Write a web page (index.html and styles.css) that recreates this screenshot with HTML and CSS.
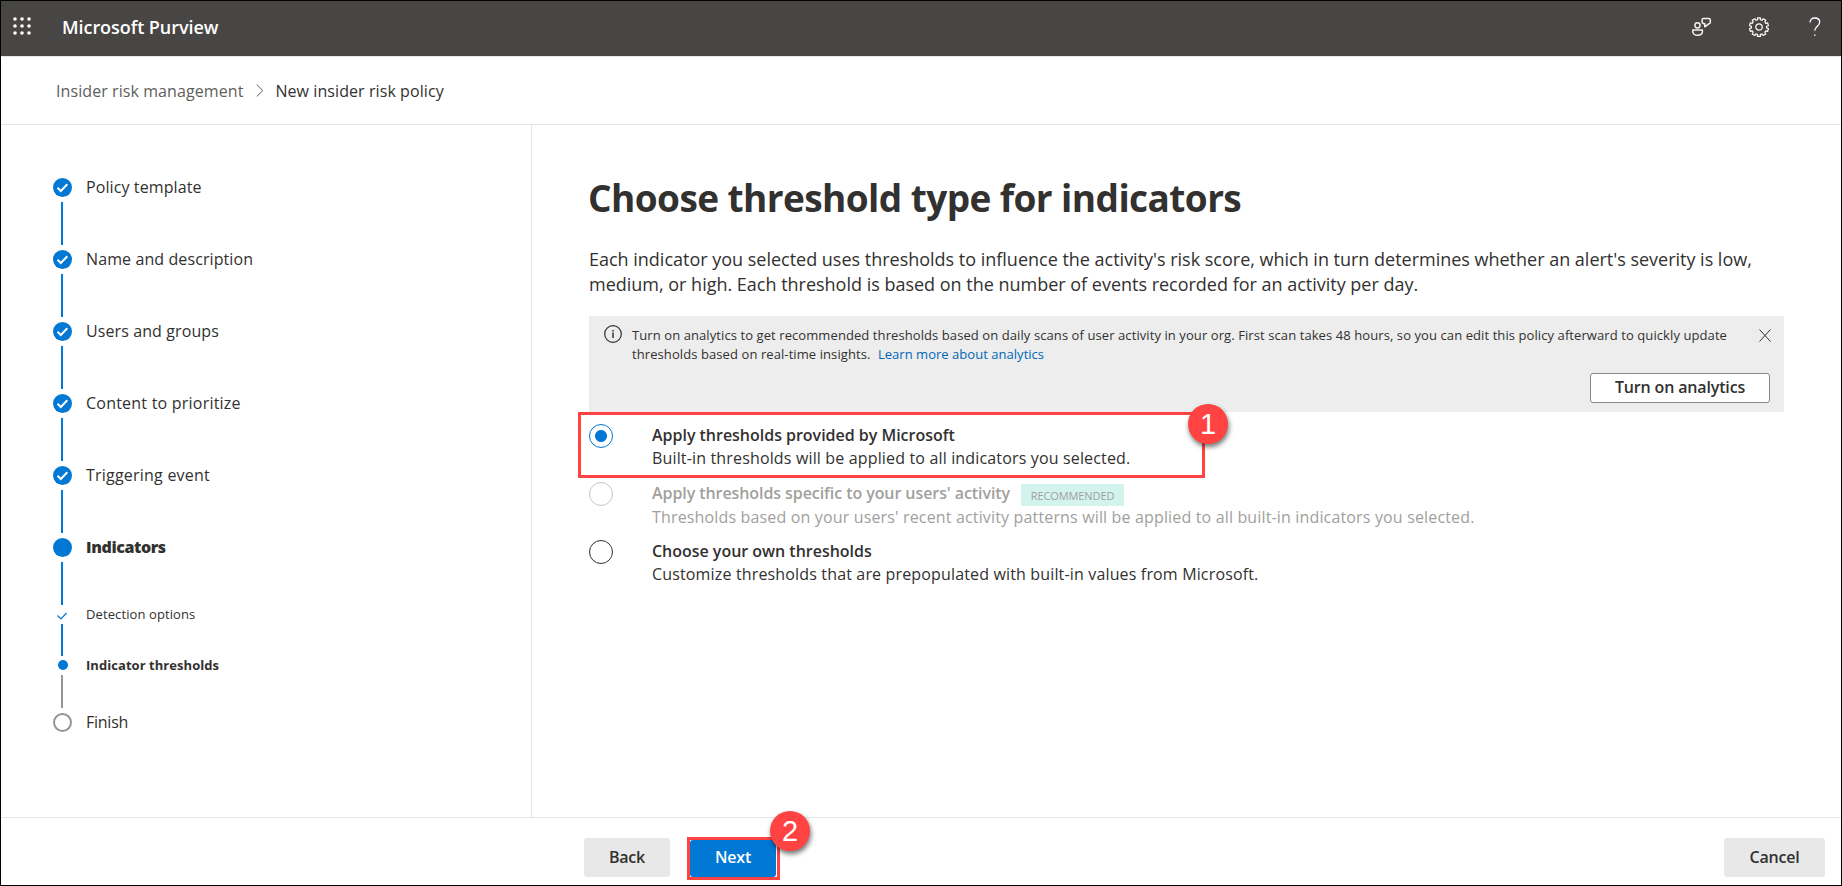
FILE: index.html
```html
<!DOCTYPE html>
<html lang="en">
<head>
<meta charset="utf-8">
<title>Microsoft Purview</title>
<link rel="stylesheet" href="styles.css">
</head>
<body>
<div class="app">
  <header class="topbar">
    <svg class="waffle" width="18" height="18" viewBox="0 0 18 18"><g fill="#fff"><circle cx="2" cy="2" r="1.8"/><circle cx="9" cy="2" r="1.8"/><circle cx="16" cy="2" r="1.8"/><circle cx="2" cy="9" r="1.8"/><circle cx="9" cy="9" r="1.8"/><circle cx="16" cy="9" r="1.8"/><circle cx="2" cy="16" r="1.8"/><circle cx="9" cy="16" r="1.8"/><circle cx="16" cy="16" r="1.8"/></g></svg>
    <span class="brand">Microsoft Purview</span>
    <div class="tools">
      <svg width="20" height="20" viewBox="0 0 20 20" fill="none" stroke="#f3f2f1" stroke-width="1.5" stroke-linejoin="round"><circle cx="5.500" cy="8.300" r="2.600"/><path d="M.8 13h9.600v1.600c0 2.200-1.900 3.700-4.800 3.700S.8 16.800.8 14.600z"/><path d="M11.200 1.500h5.600q1.500 0 1.500 1.500v2.200q0 1.600-1.500 1.600l-4 3V6.800q-2.400 0-2.700-2V3q0-1.500 1.100-1.500z"/></svg>
      <svg class="gear" width="20" height="20" viewBox="0 0 20 20" fill="none" stroke="#fff" stroke-width="1.200" stroke-linejoin="round"><circle cx="10" cy="10" r="3.200"/><path d="M8.700 2.700 8.500.800h3l-.2 1.900 1.700.6 1.300-1.600 2.500 1.500-1 1.800 1 1.300 1.900-.5.700 2.900-1.800.6v1.600l1.800.6-.7 2.900-1.900-.5-1 1.300 1 1.800-2.500 1.500-1.300-1.600-1.700.6.2 1.900h-3l.2-1.900-1.700-.6-1.300 1.600-2.500-1.500 1-1.800-1-1.300-1.900.5-.7-2.900 1.800-.6V9.300L.600 8.700l.7-2.900 1.900.5 1-1.300-1-1.800 2.500-1.500L7 3.300z"/></svg>
      <svg class="help" width="12" height="20" viewBox="0 0 12 20" fill="none" stroke="#fff" stroke-width="1.300"><path d="M1 5.500C1 2.500 3 1 5.800 1s4.900 1.600 4.900 4.200c0 3.800-5 4.200-5 8.600"/><path d="M5 18.200h1.500"/></svg>
    </div>
  </header>
  <nav class="crumbs">
    <span class="crumb-parent">Insider risk management</span>
    <svg width="8" height="13" viewBox="0 0 8 13" fill="none" stroke="#605e5c"><path d="M.7.500 6.800 6.500.7 12.500"/></svg>
    <span class="crumb-current">New insider risk policy</span>
  </nav>
  <div class="body">
    <aside class="steps">
      <div class="step"><i class="mark"><svg width="19" height="19" viewBox="0 0 19 19"><circle cx="9.500" cy="9.500" r="9.500" fill="#0078d4"/><path d="M4.500 9.800 7.800 13 14.300 6.200" fill="none" stroke="#fff" stroke-width="2"/></svg></i><span>Policy template</span></div>
      <div class="step"><i class="mark"><svg width="19" height="19" viewBox="0 0 19 19"><circle cx="9.500" cy="9.500" r="9.500" fill="#0078d4"/><path d="M4.500 9.800 7.800 13 14.300 6.200" fill="none" stroke="#fff" stroke-width="2"/></svg></i><span>Name and description</span></div>
      <div class="step"><i class="mark"><svg width="19" height="19" viewBox="0 0 19 19"><circle cx="9.500" cy="9.500" r="9.500" fill="#0078d4"/><path d="M4.500 9.800 7.800 13 14.300 6.200" fill="none" stroke="#fff" stroke-width="2"/></svg></i><span>Users and groups</span></div>
      <div class="step wide"><i class="mark"><svg width="19" height="19" viewBox="0 0 19 19"><circle cx="9.500" cy="9.500" r="9.500" fill="#0078d4"/><path d="M4.500 9.800 7.800 13 14.300 6.200" fill="none" stroke="#fff" stroke-width="2"/></svg></i><span>Content to prioritize</span></div>
      <div class="step wide"><i class="mark"><svg width="19" height="19" viewBox="0 0 19 19"><circle cx="9.500" cy="9.500" r="9.500" fill="#0078d4"/><path d="M4.500 9.800 7.800 13 14.300 6.200" fill="none" stroke="#fff" stroke-width="2"/></svg></i><span>Triggering event</span></div>
      <div class="step current"><i class="mark dot"></i><span>Indicators</span></div>
      <div class="step sub done"><i class="mark"><svg width="10" height="8" viewBox="0 0 10 8" fill="none" stroke="#0078d4" stroke-width="1.200"><path d="M.5 3.500 4 7 9.500 1"/></svg></i><span>Detection options</span></div>
      <div class="step sub active"><i class="mark dot"></i><span>Indicator thresholds</span></div>
      <div class="step last"><i class="mark ring"></i><span>Finish</span></div>
    </aside>
    <main class="main">
      <h1>Choose threshold type for indicators</h1>
      <p class="lead">Each indicator you selected uses thresholds to influence the activity's risk score, which in turn determines whether an alert's severity is low,<br>medium, or high. Each threshold is based on the number of events recorded for an activity per day.</p>
      <section class="banner">
        <svg class="info" width="18" height="18" viewBox="0 0 18 18" fill="none" stroke="#323130"><circle cx="9" cy="9" r="8.300" stroke-width="1.200"/><path d="M9 7.500V13M9 5v1.500" stroke-width="1.500"/></svg>
        <p class="note">Turn on analytics to get recommended thresholds based on daily scans of user activity in your org. First scan takes 48 hours, so you can edit this policy afterward to quickly update<br>thresholds based on real-time insights. <a>Learn more about analytics</a></p>
        <svg class="close" width="12" height="13" viewBox="0 0 12 13" fill="none" stroke="#323130"><path d="M.5.500l11 12M11.500.500l-11 12"/></svg>
        <button class="outline">Turn on analytics</button>
      </section>
      <div class="options">
        <label class="option picked"><i class="radio"></i><div><strong>Apply thresholds provided by Microsoft</strong><p>Built-in thresholds will be applied to all indicators you selected.</p></div></label>
        <label class="option disabled"><i class="radio"></i><div><strong>Apply thresholds specific to your users' activity<em class="tag">RECOMMENDED</em></strong><p>Thresholds based on your users' recent activity patterns will be applied to all built-in indicators you selected.</p></div></label>
        <label class="option"><i class="radio"></i><div><strong>Choose your own thresholds</strong><p>Customize thresholds that are prepopulated with built-in values from Microsoft.</p></div></label>
        <div class="frame"><b class="pin">1</b></div>
      </div>
    </main>
  </div>
  <footer class="footer">
    <button class="btn">Back</button>
    <div class="next-wrap"><button class="btn primary">Next</button><b class="pin">2</b></div>
    <button class="btn cancel">Cancel</button>
  </footer>
</div>
</body>
</html>
```
FILE: styles.css
```css
* { box-sizing: border-box; }
body { margin: 0; font-family: "Open Sans", "Noto Sans", sans-serif; font-size: 16px; color: #323130; background: #fff; }
i, em { font-style: normal; }
p, h1 { margin: 0; }
svg { display: block; }
button { font: inherit; color: inherit; border: 0; padding: 0; white-space: nowrap; }
span, p, h1 { white-space: nowrap; }

.app { width: 1842px; height: 886px; border: 1px solid #000; display: flex; flex-direction: column; overflow: hidden; }
.topbar { height: 55px; background: #484644; display: flex; align-items: center; padding: 0 20px 4px 12px; flex: none; }
.waffle { margin-top: -1px; }
.brand { color: #fff; font-weight: 600; font-size: 18px; letter-spacing: -.05px; margin-left: 31px; }
.tools { margin-left: auto; display: flex; align-items: center; }
.gear { margin-left: 37px; }
.help { margin-left: 40px; }
.crumbs { height: 69px; border-top: 1px solid #e6e6e6; border-bottom: 1px solid #e6e6e6; display: flex; align-items: center; padding-left: 55px; gap: 13px; letter-spacing: .08px; flex: none; }
.crumb-parent { color: #605e5c; }
.crumb-current { margin-left: -2px; }

.body { flex: 1; display: flex; min-height: 0; }
.steps { width: 531px; border-right: 1px solid #e6e6e6; padding: 53px 0 0 52px; flex: none; }
.step { display: flex; position: relative; height: 72px; line-height: 18px; letter-spacing: .1px; }
.wide { letter-spacing: .22px; }
.mark { width: 19px; height: 19px; margin-right: 14px; display: flex; justify-content: center; align-items: center; flex: none; }
.dot { border-radius: 50%; background: #0078d4; }
.step::after { content: ""; position: absolute; left: 8px; top: 24px; width: 2px; bottom: 5px; background: #0078d4; }
.current { height: 67px; font-weight: 800; letter-spacing: -.4px; }
.current::after { bottom: 0; }
.sub { height: 51px; font-size: 13px; }
.sub::after { top: 19px; bottom: 0; }
.active { height: 57px; font-weight: 700; letter-spacing: .05px; }
.active::after { top: 19px; bottom: 5px; background: #979593; }
.active .dot { width: 10px; height: 10px; margin: 4px 18px 0 5px; }
.done .mark { padding: 2px 1px 0 0; }
.ring { border: 2px solid #979593; border-radius: 50%; }
.last { letter-spacing: -.25px; }
.last::after { display: none; }

.main { padding: 50px 57px 0 57px; flex: 1; }
h1 { font-size: 37px; line-height: 46px; font-weight: 700; letter-spacing: -.58px; margin-left: -1px; }
.lead { font-size: 18px; line-height: 25px; margin-top: 26px; letter-spacing: -.01px; }
.banner { background: #ededed; height: 96px; margin-top: 19px; display: grid; grid-template-columns: 43px 1fr 12px; align-content: start; padding: 9px 14px 0 0; }
.info { margin-left: 15px; }
.note { font-size: 13px; line-height: 19px; letter-spacing: .086px; padding-top: 1px; }
.note a { color: #0067b8; margin-left: 4px; letter-spacing: .03px; }
.close { margin: 4px 0 0 1px; }
.outline { grid-column: 1 / 4; justify-self: end; width: 180px; height: 30px; padding-bottom: 2px; background: #fff; border: 1px solid #8a8886; border-radius: 3px; font-weight: 600; letter-spacing: -.15px; margin-top: 9px; }
.options { position: relative; padding-top: 12px; }
.option { display: flex; height: 58px; }
.radio { width: 24px; height: 24px; border: 1px solid #323130; border-radius: 50%; margin-right: 39px; flex: none; }
.option strong { display: flex; font-weight: 600; line-height: 23px; letter-spacing: -.02px; }
.option p { line-height: 23px; letter-spacing: .155px; }
.picked .radio { border-color: #0078d4; background: radial-gradient(circle, #0078d4 5.500px, #fff 6.500px); }
.disabled { color: #a19f9d; }
.disabled strong { letter-spacing: -.075px; }
.disabled .radio { border-color: #c8c6c4; }
.tag { background: #d2f4ec; font-size: 11px; font-weight: 400; letter-spacing: -.1px; height: 22px; width: 103px; text-align: center; margin-left: 11px; margin-top: 2px; }
.frame { position: absolute; border: 3px solid #ff4343; left: -11px; top: 0; width: 627px; height: 66px; }
.pin { position: absolute; width: 40px; height: 40px; border-radius: 50%; background: #ff4343; color: #fff; font: 29px/41px "Liberation Sans", sans-serif; text-align: center; box-shadow: 1px 3px 5px rgba(0,0,0,.55); }
.frame .pin { right: -26px; top: -11px; }

.footer { height: 68px; border-top: 1px solid #e6e6e6; display: flex; padding: 20px 16px 0 583px; flex: none; }
.btn { height: 39px; width: 86px; padding-bottom: 2px; border-radius: 3px; background: #e8e8e8; font-weight: 600; letter-spacing: -.2px; }
.next-wrap { position: relative; width: 93px; height: 43px; border: 3px solid #ff4343; margin: -1px 0 0 17px; }
.primary { display: block; background: #0078d4; color: #fff; height: 37px; padding-bottom: 4px; }
.next-wrap .pin { right: -33px; top: -29px; }
.cancel { margin-left: auto; width: 101px; }
```
